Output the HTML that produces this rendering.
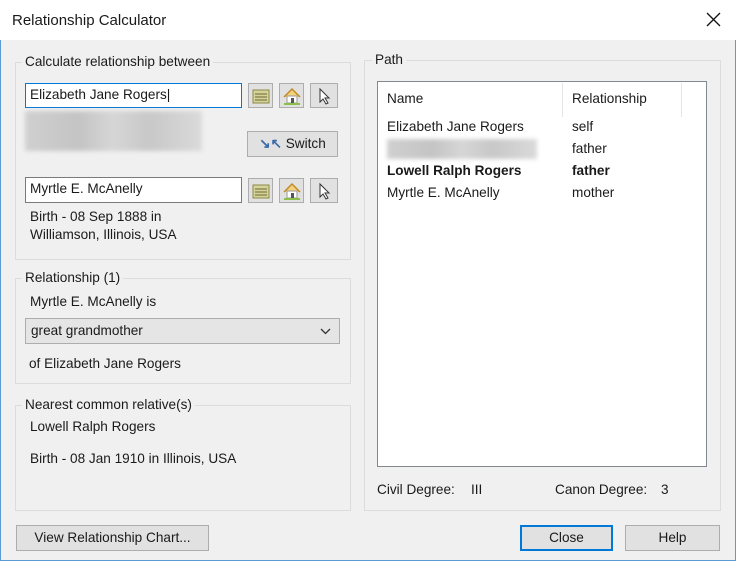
<!DOCTYPE html>
<html><head><style>
*{box-sizing:border-box;margin:0;padding:0}
body{width:736px;height:561px;background:#f0f0f0;font-family:"Liberation Sans",sans-serif;font-size:13.6px;color:#1a1a1a;position:relative;overflow:hidden}
.a{position:absolute;white-space:nowrap}
.t{line-height:16px}
.g{position:absolute;border:1px solid #dcdcdc}
.lbl{position:absolute;background:#f0f0f0;padding:0 3px;line-height:16px}
.tb{position:absolute;background:#fff;border:1px solid #7a7a7a;padding-left:4px;line-height:22px}
.ib{position:absolute;width:25px;height:25px;background:#e1e1e1;border:1px solid #adadad;display:flex;align-items:center;justify-content:center}
.btn{position:absolute;background:#e1e1e1;border:1px solid #adadad;text-align:center;line-height:24px}
.blur{position:absolute;background:linear-gradient(90deg,#d0d0d0,#c4c4c4 30%,#d6d6d6 50%,#c8c8c8 70%,#dadada);filter:blur(2px)}
</style></head><body>
<div class="a" style="left:0;top:0;width:736px;height:40px;background:#fff"></div>
<div class="a" style="left:0;top:40px;width:1px;height:521px;background:#5b9bd5"></div>
<div class="a" style="left:735px;top:40px;width:1px;height:521px;background:#5b9bd5"></div>
<div class="a" style="left:0;top:560px;width:736px;height:1px;background:#5b9bd5"></div>
<div class="a t" style="left:12px;top:13px;font-size:15px">Relationship Calculator</div>
<svg class="a" style="left:706px;top:12px" width="15" height="15"><path d="M1 1L14 14M14 1L1 14" stroke="#111" stroke-width="1.3"/></svg>

<div class="g" style="left:15px;top:62px;width:336px;height:198px"></div>
<div class="lbl" style="left:22px;top:54px">Calculate relationship between</div>
<div class="tb" style="left:25px;top:83px;width:217px;height:25px;border-color:#0078d7">Elizabeth Jane Rogers|</div>
<div class="ib" style="left:248px;top:83px"><svg width="18" height="16"><rect x="1" y="2" width="16" height="13" fill="#d6d39a" stroke="#8a8a4a"/><path d="M3 6H15M3 9H15M3 12H15" stroke="#6a6a30"/></svg></div>
<div class="ib" style="left:279px;top:83px"><svg width="20" height="18"><path d="M2 10L10 2L18 10" fill="#f3d27a" stroke="#c08a2a" stroke-width="1.5"/><rect x="5" y="9" width="10" height="7" fill="#fff" stroke="#999"/><rect x="9" y="11" width="3" height="5" fill="#555"/><rect x="2" y="16" width="16" height="2" fill="#8cbf4a"/></svg></div>
<div class="ib" style="left:310px;top:83px;width:28px"><svg width="14" height="18"><path d="M3 2V15L6 12L9 17L11 16L8 11H12Z" fill="#fff" stroke="#333"/></svg></div>
<div class="blur" style="left:25px;top:111px;width:177px;height:40px"></div>
<div class="btn" style="left:247px;top:131px;width:91px;height:26px"><span style="color:#3a6aa8;font-weight:bold">↘↖</span> Switch</div>
<div class="tb" style="left:25px;top:177px;width:217px;height:26px">Myrtle E. McAnelly</div>
<div class="ib" style="left:248px;top:178px"><svg width="18" height="16"><rect x="1" y="2" width="16" height="13" fill="#d6d39a" stroke="#8a8a4a"/><path d="M3 6H15M3 9H15M3 12H15" stroke="#6a6a30"/></svg></div>
<div class="ib" style="left:279px;top:178px"><svg width="20" height="18"><path d="M2 10L10 2L18 10" fill="#f3d27a" stroke="#c08a2a" stroke-width="1.5"/><rect x="5" y="9" width="10" height="7" fill="#fff" stroke="#999"/><rect x="9" y="11" width="3" height="5" fill="#555"/><rect x="2" y="16" width="16" height="2" fill="#8cbf4a"/></svg></div>
<div class="ib" style="left:310px;top:178px;width:28px"><svg width="14" height="18"><path d="M3 2V15L6 12L9 17L11 16L8 11H12Z" fill="#fff" stroke="#333"/></svg></div>
<div class="a t" style="left:30px;top:209px">Birth - 08 Sep 1888 in</div>
<div class="a t" style="left:30px;top:227px">Williamson, Illinois, USA</div>

<div class="g" style="left:15px;top:278px;width:336px;height:106px"></div>
<div class="lbl" style="left:22px;top:270px">Relationship (1)</div>
<div class="a t" style="left:30px;top:294px">Myrtle E. McAnelly is</div>
<div class="a" style="left:25px;top:318px;width:315px;height:26px;background:#e5e5e5;border:1px solid #adadad;padding-left:5px;line-height:24px">great grandmother<svg style="position:absolute;right:8px;top:9px" width="11" height="7"><path d="M1 1L5.5 5.5L10 1" fill="none" stroke="#333" stroke-width="1.3"/></svg></div>
<div class="a t" style="left:29px;top:356px">of Elizabeth Jane Rogers</div>

<div class="g" style="left:15px;top:405px;width:336px;height:106px"></div>
<div class="lbl" style="left:22px;top:397px">Nearest common relative(s)</div>
<div class="a t" style="left:30px;top:419px">Lowell Ralph Rogers</div>
<div class="a t" style="left:30px;top:451px">Birth - 08 Jan 1910 in Illinois, USA</div>

<div class="g" style="left:364px;top:60px;width:357px;height:451px"></div>
<div class="lbl" style="left:372px;top:52px">Path</div>
<div class="a" style="left:377px;top:81px;width:330px;height:386px;background:#fff;border:1px solid #828790"></div>
<div class="a" style="left:562px;top:83px;width:1px;height:34px;background:#e5e5e5"></div>
<div class="a" style="left:681px;top:83px;width:1px;height:34px;background:#e5e5e5"></div>
<div class="a t" style="left:387px;top:91px">Name</div>
<div class="a t" style="left:572px;top:91px">Relationship</div>
<div class="a t" style="left:387px;top:119px">Elizabeth Jane Rogers</div>
<div class="a t" style="left:572px;top:119px">self</div>
<div class="blur" style="left:387px;top:139px;width:150px;height:20px"></div>
<div class="a t" style="left:572px;top:141px">father</div>
<div class="a t" style="left:387px;top:163px;font-weight:bold">Lowell Ralph Rogers</div>
<div class="a t" style="left:572px;top:163px;font-weight:bold">father</div>
<div class="a t" style="left:387px;top:185px">Myrtle E. McAnelly</div>
<div class="a t" style="left:572px;top:185px">mother</div>
<div class="a t" style="left:377px;top:482px">Civil Degree:</div>
<div class="a t" style="left:471px;top:482px">III</div>
<div class="a t" style="left:555px;top:482px">Canon Degree:</div>
<div class="a t" style="left:661px;top:482px">3</div>

<div class="btn" style="left:16px;top:525px;width:193px;height:26px">View Relationship Chart...</div>
<div class="btn" style="left:520px;top:525px;width:93px;height:26px;border:2px solid #0078d7;line-height:22px">Close</div>
<div class="btn" style="left:625px;top:525px;width:95px;height:26px">Help</div>
</body></html>
